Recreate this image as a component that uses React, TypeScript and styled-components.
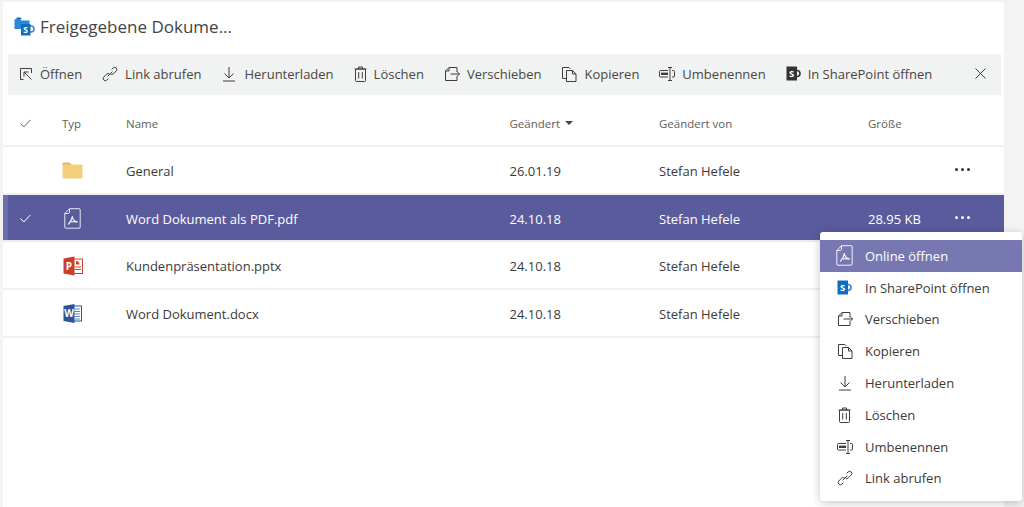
import React from "react";
import styled, { createGlobalStyle } from "styled-components";

const GlobalStyle = createGlobalStyle`
  html, body {
    margin: 0;
    padding: 0;
    background: #f3f3f3;
  }
  * {
    box-sizing: border-box;
  }
`;

const ink = "#3f3f3f";

function SharePointIcon({ mono }: { mono?: boolean }) {
  const main = mono ? "#333" : "#106ebe";
  return (
    <svg width="15" height="15" viewBox="0 0 15 15">
      <circle cx="11" cy="7.5" r="3" fill="none" stroke={mono ? "#333" : "#2b88d8"} strokeWidth="1.6" />
      <rect x="0.5" y="0.5" width="10.5" height="14" fill={main} />
      <text x="5.7" y="11" fontSize="9.5" fontWeight="700" fontFamily="Open Sans, sans-serif" fill="#fff" textAnchor="middle">
        S
      </text>
    </svg>
  );
}

function TitleLogo() {
  return (
    <svg width="21" height="19" viewBox="0 0 21 19">
      <path d="M0.5 3a1 1 0 0 1 1-1H6L7.5 3.5H15.5V12H0.5Z" fill="#2b88d8" />
      <path d="M2.5 0.5H6.5L8 2H2.5Z" fill="#0f6cbd" />
      <circle cx="17" cy="12" r="3" fill="none" stroke="#2b88d8" strokeWidth="1.5" />
      <rect x="7" y="7" width="9.5" height="11.5" fill="#106ebe" />
      <text x="11.7" y="16.2" fontSize="8.5" fontWeight="700" fontFamily="Open Sans, sans-serif" fill="#fff" textAnchor="middle">
        S
      </text>
    </svg>
  );
}

function OpenIcon() {
  return (
    <svg width="14" height="14" viewBox="0 0 14 14" fill="none" stroke={ink} strokeWidth="1">
      <path d="M4.5 12.5H1.5V1.5H12.5V6" />
      <path d="M12.5 12.5L5 5M5 9.5V5H9.5" />
    </svg>
  );
}

function LinkIcon() {
  return (
    <svg width="16" height="16" viewBox="0 0 16 16" fill="none" stroke={ink} strokeWidth="1">
      <path d="M6.4 12.6L4.8 14.2a2.2 2.2 0 0 1-3.1-3.1l2.9-2.9a2.2 2.2 0 0 1 3.1 0" />
      <path d="M9.6 3.4L11.2 1.8a2.2 2.2 0 0 1 3.1 3.1l-2.9 2.9a2.2 2.2 0 0 1-3.1 0" />
      <path d="M5.6 10.4L10.4 5.6" />
    </svg>
  );
}

function DownloadIcon() {
  return (
    <svg width="16" height="16" viewBox="0 0 16 16" fill="none" stroke={ink} strokeWidth="1">
      <path d="M8 1V12M3.5 7.5L8 12L12.5 7.5M2 15H14" />
    </svg>
  );
}

function TrashIcon() {
  return (
    <svg width="13" height="16" viewBox="0 0 13 16" fill="none" stroke={ink} strokeWidth="1">
      <path d="M0.5 3H12.5M4.5 3V1H8.5V3" />
      <rect x="1.5" y="3" width="10" height="12.5" rx="1" />
      <path d="M4.7 6V12.5M8.3 6V12.5" />
    </svg>
  );
}

function MoveIcon() {
  return (
    <svg width="16" height="16" viewBox="0 0 16 16" fill="none" stroke={ink} strokeWidth="1">
      <path d="M13 5.5V1.5H5L1.5 5V14.5H13V11" />
      <path d="M1.5 5H5V1.5" />
      <path d="M6.5 8H15.5M12.5 5L15.5 8L12.5 11" />
    </svg>
  );
}

function CopyIcon() {
  return (
    <svg width="16" height="16" viewBox="0 0 16 16" fill="none" stroke={ink} strokeWidth="1">
      <path d="M5.5 12.5H1.5V1.5H8L9.5 3" />
      <path d="M5.5 4.5H11.5L15 8V15.5H5.5Z" />
      <path d="M11.5 4.5V8H15" />
    </svg>
  );
}

function RenameIcon() {
  return (
    <svg width="16" height="16" viewBox="0 0 16 16" fill="none" stroke={ink} strokeWidth="1">
      <path d="M9 4.5H1.5a1 1 0 0 0-1 1V10a1 1 0 0 0 1 1H9" />
      <rect x="2" y="6.6" width="7" height="2.4" fill={ink} stroke="none" />
      <path d="M13 4.5H14.5a1 1 0 0 1 1 1V10a1 1 0 0 1-1 1H13" />
      <path d="M9 1.5H13M11 1.5V14.5M9 14.5H13" />
    </svg>
  );
}

function PdfIcon({ color }: { color: string }) {
  return (
    <svg width="17" height="21" viewBox="0 0 17 21" fill="none" stroke={color} strokeWidth="1">
      <path d="M5.5 0.7H15a1.2 1.2 0 0 1 1.2 1.2V19a1.2 1.2 0 0 1-1.2 1.2H2A1.2 1.2 0 0 1 0.8 19V5.5Z" />
      <path d="M0.8 5.5H4.3a1.2 1.2 0 0 0 1.2-1.2V0.7" />
      <path d="M8.2 8C8.6 11 10.5 13.4 13.6 14M8.4 8C8 11 6.6 14.2 4.2 16.4M6 14C8 13.4 10.2 13.4 13.6 14" strokeWidth="1.3" />
    </svg>
  );
}

function FolderIcon() {
  return (
    <svg width="21" height="17" viewBox="0 0 21 17">
      <path d="M0.5 1.5a1 1 0 0 1 1-1H7.5L10 3H0.5Z" fill="#dfb863" />
      <rect x="0.5" y="2.5" width="20" height="14" rx="1" fill="#f2cf7d" />
    </svg>
  );
}

function PowerPointIcon() {
  return (
    <svg width="20" height="20" viewBox="0 0 20 20">
      <rect x="8" y="3" width="11.5" height="14.5" fill="#fff" stroke="#c9452b" strokeWidth="1" />
      <path d="M13 5v3.5h3.5A3.5 3.5 0 0 0 13 5Z" fill="#c9452b" />
      <path d="M11.5 11h6.5M11.5 13.5h6.5" stroke="#c9452b" />
      <path d="M0.5 2.5L11.5 0.5V19.5L0.5 17.5Z" fill="#c9402a" />
      <text x="6" y="13.8" fontSize="10" fontWeight="700" fontFamily="Open Sans, sans-serif" fill="#fff" textAnchor="middle">
        P
      </text>
    </svg>
  );
}

function WordIcon() {
  return (
    <svg width="19" height="19" viewBox="0 0 19 19">
      <rect x="8" y="2" width="10.5" height="15" fill="#fff" stroke="#2b5797" strokeWidth="1" />
      <path d="M11.5 5h5.5M11.5 7.5h5.5M11.5 10h5.5M11.5 12.5h5.5M11.5 15h5.5" stroke="#5b85bd" />
      <path d="M0.5 2L11.5 0V19L0.5 17Z" fill="#2a5699" />
      <text x="6" y="13" fontSize="10" fontWeight="700" fontFamily="Open Sans, sans-serif" fill="#fff" textAnchor="middle">
        W
      </text>
    </svg>
  );
}

function CheckIcon({ color }: { color: string }) {
  return (
    <svg width="11" height="9" viewBox="0 0 11 9" fill="none" stroke={color} strokeWidth="1">
      <path d="M0.5 4.5L3.8 8L10.5 0.8" />
    </svg>
  );
}

function CloseIcon() {
  return (
    <svg width="11" height="11" viewBox="0 0 11 11" fill="none" stroke={ink} strokeWidth="1">
      <path d="M0.5 0.5L10.5 10.5M10.5 0.5L0.5 10.5" />
    </svg>
  );
}

const toolbarActions = [
  { label: "Öffnen", icon: <OpenIcon /> },
  { label: "Link abrufen", icon: <LinkIcon /> },
  { label: "Herunterladen", icon: <DownloadIcon /> },
  { label: "Löschen", icon: <TrashIcon /> },
  { label: "Verschieben", icon: <MoveIcon /> },
  { label: "Kopieren", icon: <CopyIcon /> },
  { label: "Umbenennen", icon: <RenameIcon /> },
  { label: "In SharePoint öffnen", icon: <SharePointIcon mono /> },
];

const files = [
  { name: "General", date: "26.01.19", icon: <FolderIcon />, size: "", selected: false },
  { name: "Word Dokument als PDF.pdf", date: "24.10.18", icon: <PdfIcon color="#e8e8f2" />, size: "28.95 KB", selected: true },
  { name: "Kundenpräsentation.pptx", date: "24.10.18", icon: <PowerPointIcon />, size: "", selected: false },
  { name: "Word Dokument.docx", date: "24.10.18", icon: <WordIcon />, size: "", selected: false },
];

const menuItems = [
  { label: "Online öffnen", icon: <PdfIcon color="#f0f0f8" />, active: true },
  { label: "In SharePoint öffnen", icon: <SharePointIcon /> },
  { label: "Verschieben", icon: <MoveIcon /> },
  { label: "Kopieren", icon: <CopyIcon /> },
  { label: "Herunterladen", icon: <DownloadIcon /> },
  { label: "Löschen", icon: <TrashIcon /> },
  { label: "Umbenennen", icon: <RenameIcon /> },
  { label: "Link abrufen", icon: <LinkIcon /> },
];

export default function App() {
  return (
    <Page>
      <GlobalStyle />
      <Panel>
        <TitleBar>
          <TitleLogo />
          <Title>Freigegebene Dokume...</Title>
        </TitleBar>
        <Toolbar>
          {toolbarActions.map((action) => (
            <ToolButton key={action.label}>
              <ToolIcon>{action.icon}</ToolIcon>
              {action.label}
            </ToolButton>
          ))}
          <CloseButton>
            <CloseIcon />
          </CloseButton>
        </Toolbar>
        <HeaderRow>
          <CheckCell>
            <CheckIcon color="#666" />
          </CheckCell>
          <HeaderText>Typ</HeaderText>
          <HeaderText>Name</HeaderText>
          <HeaderText>
            Geändert <SortArrow />
          </HeaderText>
          <HeaderText>Geändert von</HeaderText>
          <HeaderText>Größe</HeaderText>
        </HeaderRow>
        {files.map((file) => (
          <FileRow key={file.name} $selected={file.selected}>
            <CheckCell>{file.selected && <CheckIcon color="#fff" />}</CheckCell>
            <TypeCell>{file.icon}</TypeCell>
            <div>{file.name}</div>
            <div>{file.date}</div>
            <div>Stefan Hefele</div>
            <div>{file.size}</div>
            <MoreDots $selected={file.selected}>
              <i />
              <i />
              <i />
            </MoreDots>
          </FileRow>
        ))}
      </Panel>
      <ContextMenu>
        {menuItems.map((item) => (
          <MenuItem key={item.label} $active={item.active}>
            <MenuIcon>{item.icon}</MenuIcon>
            {item.label}
          </MenuItem>
        ))}
      </ContextMenu>
    </Page>
  );
}

const Page = styled.div`
  position: relative;
  width: 1024px;
  height: 507px;
  overflow: hidden;
  padding: 2px 20px 0 3px;
  font-family: "Open Sans", "Liberation Sans", sans-serif;
  font-size: 13px;
  color: #3b3a39;
`;

const Panel = styled.div`
  height: 505px;
  background: #fff;
`;

const TitleBar = styled.div`
  display: flex;
  align-items: center;
  gap: 5px;
  height: 52px;
  padding: 0 0 4px 11px;
`;

const Title = styled.h1`
  margin: 0;
  font-size: 17px;
  font-weight: 400;
  color: #444;
`;

const Toolbar = styled.div`
  display: flex;
  align-items: center;
  gap: 20px;
  height: 41px;
  margin: 0 3px 0 5px;
  padding: 0 15px 2px 11px;
  background: #f1f2f2;
`;

const ToolButton = styled.div`
  display: flex;
  align-items: center;
  gap: 7px;
  color: #484644;
  white-space: nowrap;
`;

const ToolIcon = styled.span`
  display: flex;
`;

const CloseButton = styled.span`
  display: flex;
  margin-left: auto;
`;

const columns = "grid-template-columns: 59px 64px 383.5px 149.5px 209px 87px 1fr;";

const HeaderRow = styled.div`
  display: grid;
  ${columns}
  align-items: center;
  height: 52px;
  padding-top: 6px;
  border-bottom: 2px solid #f0f0f0;
`;

const HeaderText = styled.div`
  font-size: 11.5px;
  color: #605e5c;
  display: flex;
  align-items: center;
  gap: 5px;
`;

const SortArrow = styled.span`
  width: 0;
  height: 0;
  border: 4px solid transparent;
  border-top: 4px solid #444;
  border-bottom: 0;
`;

const CheckCell = styled.div`
  display: flex;
  padding-left: 17px;
`;

const TypeCell = styled.div`
  display: flex;
  justify-content: center;
  width: 21px;
`;

const FileRow = styled.div<{ $selected?: boolean }>`
  display: grid;
  ${columns}
  align-items: center;
  height: 47.7px;
  padding-top: 2px;
  border-bottom: 2px solid ${({ $selected }) => ($selected ? "#ebebf3" : "#f0f0f0")};
  background: ${({ $selected }) => ($selected ? "#5a5b9c" : "#fff")};
  color: ${({ $selected }) => ($selected ? "#fff" : "#3b3a39")};
  box-shadow: ${({ $selected }) => ($selected ? "inset 5px 0 0 #6c6eac" : "none")};
`;

const MoreDots = styled.div<{ $selected?: boolean }>`
  display: flex;
  gap: 3px;
  margin-top: -2px;
  i {
    width: 3px;
    height: 3px;
    border-radius: 50%;
    background: ${({ $selected }) => ($selected ? "#fff" : "#333")};
  }
`;

const ContextMenu = styled.div`
  position: absolute;
  left: 820px;
  top: 232px;
  width: 202px;
  height: 269px;
  padding: 8px 0;
  background: #fff;
  border-radius: 3px;
  box-shadow: 0 2px 10px rgba(0, 0, 0, 0.22);
`;

const MenuItem = styled.div<{ $active?: boolean }>`
  display: flex;
  align-items: center;
  gap: 12px;
  height: 31.8px;
  padding-left: 16px;
  background: ${({ $active }) => ($active ? "#7778b2" : "transparent")};
  color: ${({ $active }) => ($active ? "#fff" : "#3b3a39")};
`;

const MenuIcon = styled.span`
  display: flex;
  justify-content: center;
  width: 17px;
`;
